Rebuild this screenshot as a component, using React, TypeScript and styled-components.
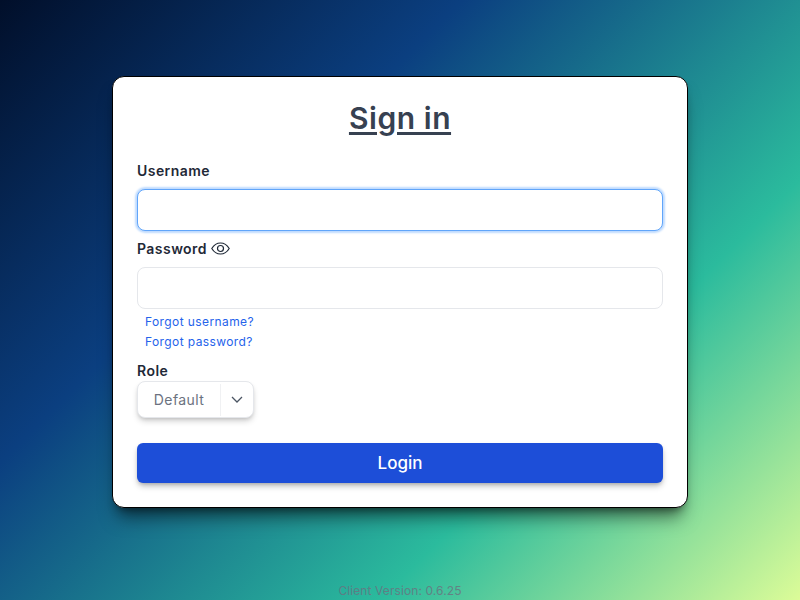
import React from "react";
import styled, { createGlobalStyle } from "styled-components";

const GlobalStyle = createGlobalStyle`
  html, body {
    margin: 0;
    padding: 0;
    height: 100%;
  }
  body {
    font-family: Inter, "Open Sans", "Liberation Sans", sans-serif;
  }
  #root {
    height: 100%;
  }
`;

const Page = styled.div`
  position: relative;
  width: 800px;
  height: 600px;
  overflow: hidden;
  display: flex;
  justify-content: center;
  padding-top: 76px;
  box-sizing: border-box;
  background: linear-gradient(
    135deg,
    #010f2a 0%,
    #0b3f80 33%,
    #2bbb9d 70%,
    #dcfc98 100%
  );
`;

const Card = styled.form`
  width: 576px;
  height: 432px;
  box-sizing: border-box;
  background: #fff;
  border: 1px solid #000;
  border-radius: 12px;
  padding: 20px 24px 24px;
  box-shadow: 0 15px 18px -6px rgba(0, 0, 0, 0.5), 0 6px 8px -5px rgba(0, 0, 0, 0.5);
  display: flex;
  flex-direction: column;
`;

const Title = styled.h1`
  margin: 0 0 21px;
  text-align: center;
  font-size: 30px;
  line-height: 42px;
  font-weight: 600;
  letter-spacing: 0.55px;
  color: #374151;
  text-decoration: underline;
  text-underline-offset: 3px;
`;

const Label = styled.label`
  display: flex;
  align-items: center;
  gap: 4px;
  height: 22px;
  box-sizing: border-box;
  padding-bottom: 1px;
  font-size: 14px;
  font-weight: 600;
  letter-spacing: 0.45px;
  color: #1f2937;
`;

const Input = styled.div<{ $focused?: boolean }>`
  height: 42px;
  box-sizing: border-box;
  margin-top: 7px;
  border-radius: 8px;
  background: #fff;
  border: 1px solid ${(p) => (p.$focused ? "#60a5fa" : "#e5e7eb")};
  box-shadow: ${(p) => (p.$focused ? "0 0 2px 2px #bfdbfe" : "none")};
`;

const Spaced = styled.div`
  margin-top: 7px;
`;

const LinkList = styled.div`
  display: flex;
  flex-direction: column;
  padding: 3px 0 0 8px;
`;

const ForgotLink = styled.a`
  font-size: 12px;
  line-height: 20px;
  letter-spacing: 0.4px;
  color: #2563eb;
  cursor: pointer;
`;

const RoleSection = styled.div`
  margin-top: 9px;
`;

const RoleLabel = styled(Label)`
  height: 20px;
`;

const RoleSelect = styled.div`
  width: 117px;
  height: 37px;
  box-sizing: border-box;
  display: flex;
  align-items: center;
  border: 1px solid #e5e7eb;
  border-radius: 8px;
  background: #fff;
  box-shadow: 0 4px 6px -1px rgba(0, 0, 0, 0.18), 0 2px 4px -2px rgba(0, 0, 0, 0.18);
`;

const RoleValue = styled.span`
  flex: 1;
  text-align: center;
  font-size: 14px;
  letter-spacing: 0.4px;
  color: #6b7280;
  line-height: 32px;
  border-right: 1px solid #f0f1f3;
`;

const RoleArrow = styled.span`
  width: 32px;
  display: flex;
  justify-content: center;
  align-items: center;
  color: #4b5563;
`;

const LoginButton = styled.button`
  height: 40px;
  margin-top: 25px;
  width: 100%;
  border: none;
  border-radius: 6px;
  background: #1d4ed8;
  color: #fff;
  font-family: inherit;
  font-size: 17px;
  font-weight: 500;
  box-shadow: 0 4px 6px -1px rgba(0, 0, 0, 0.25), 0 2px 4px -2px rgba(0, 0, 0, 0.25);
`;

const Version = styled.div`
  position: absolute;
  left: 0;
  right: 0;
  bottom: 1px;
  text-align: center;
  font-size: 12px;
  line-height: 16px;
  letter-spacing: 0.1px;
  color: #6b7280;
  opacity: 0.8;
`;

const EyeIcon = () => (
  <svg width="19" height="13" viewBox="0 0 19 13" fill="none" stroke="#1f2937" strokeWidth="1.2">
    <path d="M0.8 6.5C3 2.8 6 1 9.5 1s6.5 1.8 8.7 5.5C16 10.2 13 12 9.5 12S3 10.2 0.8 6.5Z" />
    <circle cx="9.5" cy="6.5" r="3" />
  </svg>
);

const ChevronIcon = () => (
  <svg width="12" height="7" viewBox="0 0 12 7" fill="none" stroke="currentColor" strokeWidth="1.3">
    <path d="M1 1l5 5 5-5" />
  </svg>
);

export default function App() {
  return (
    <Page>
      <GlobalStyle />
      <Card>
        <Title>Sign in</Title>
        <Label>Username</Label>
        <Input $focused />
        <Spaced>
          <Label>
            Password <EyeIcon />
          </Label>
          <Input />
        </Spaced>
        <LinkList>
          <ForgotLink>Forgot username?</ForgotLink>
          <ForgotLink>Forgot password?</ForgotLink>
        </LinkList>
        <RoleSection>
          <RoleLabel>Role</RoleLabel>
          <RoleSelect>
            <RoleValue>Default</RoleValue>
            <RoleArrow>
              <ChevronIcon />
            </RoleArrow>
          </RoleSelect>
        </RoleSection>
        <LoginButton type="button">Login</LoginButton>
      </Card>
      <Version>Client Version: 0.6.25</Version>
    </Page>
  );
}
